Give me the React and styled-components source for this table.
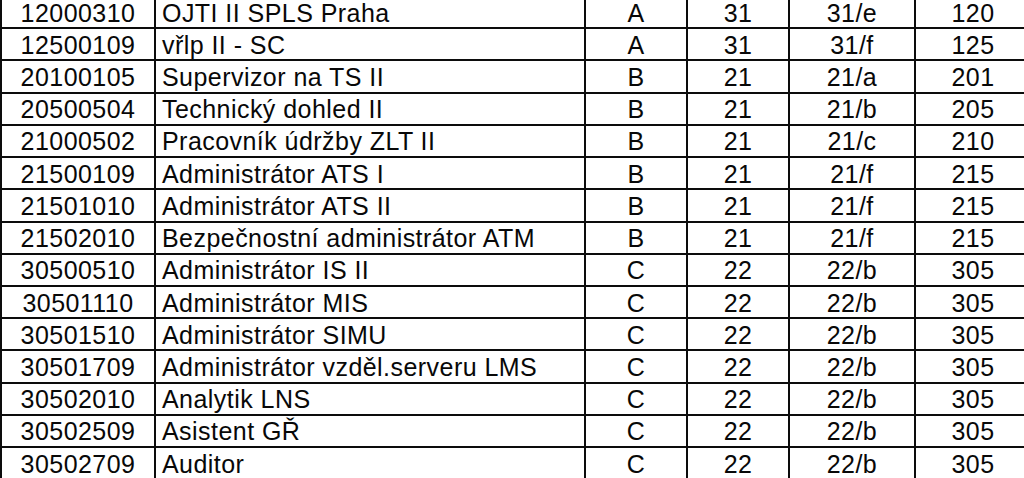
import React from "react";
import styled, { createGlobalStyle } from "styled-components";

const GlobalStyle = createGlobalStyle`
  html, body {
    margin: 0;
    padding: 0;
    background: #ffffff;
    overflow: hidden;
  }
`;

const rows = [
  ["12000310", "OJTI II SPLS Praha", "A", "31", "31/e", "120"],
  ["12500109", "vřlp II - SC", "A", "31", "31/f", "125"],
  ["20100105", "Supervizor na TS II", "B", "21", "21/a", "201"],
  ["20500504", "Technický dohled II", "B", "21", "21/b", "205"],
  ["21000502", "Pracovník údržby ZLT II", "B", "21", "21/c", "210"],
  ["21500109", "Administrátor ATS I", "B", "21", "21/f", "215"],
  ["21501010", "Administrátor ATS II", "B", "21", "21/f", "215"],
  ["21502010", "Bezpečnostní administrátor ATM", "B", "21", "21/f", "215"],
  ["30500510", "Administrátor IS II", "C", "22", "22/b", "305"],
  ["30501110", "Administrátor MIS", "C", "22", "22/b", "305"],
  ["30501510", "Administrátor SIMU", "C", "22", "22/b", "305"],
  ["30501709", "Administrátor vzděl.serveru LMS", "C", "22", "22/b", "305"],
  ["30502010", "Analytik LNS", "C", "22", "22/b", "305"],
  ["30502509", "Asistent GŘ", "C", "22", "22/b", "305"],
  ["30502709", "Auditor", "C", "22", "22/b", "305"],
];

const Sheet = styled.div`
  width: 1032px;
  margin-top: -5px;
  display: grid;
  grid-template-columns: 152px 428px 100px 100px 124px 114px;
  grid-auto-rows: 30.23px;
  gap: 2px;
  padding: 2px;
  background: #0c0c0c;
`;

const Cell = styled.div`
  background: #ffffff;
  color: #080808;
  font-family: "Liberation Sans", Arial, sans-serif;
  font-size: 25px;
  letter-spacing: 0.45px;
  line-height: 1;
  display: flex;
  align-items: center;
  justify-content: ${(p) => (p.$left ? "flex-start" : "center")};
  padding: 2px ${(p) => (p.$left ? "6px" : "0")} 0;
  white-space: nowrap;
  overflow: hidden;
`;

export default function App() {
  return (
    <>
      <GlobalStyle />
      <Sheet>
        {rows.map((r) =>
          r.map((v, i) => (
            <Cell key={r[0] + i} $left={i === 1}>
              {v}
            </Cell>
          ))
        )}
      </Sheet>
    </>
  );
}
